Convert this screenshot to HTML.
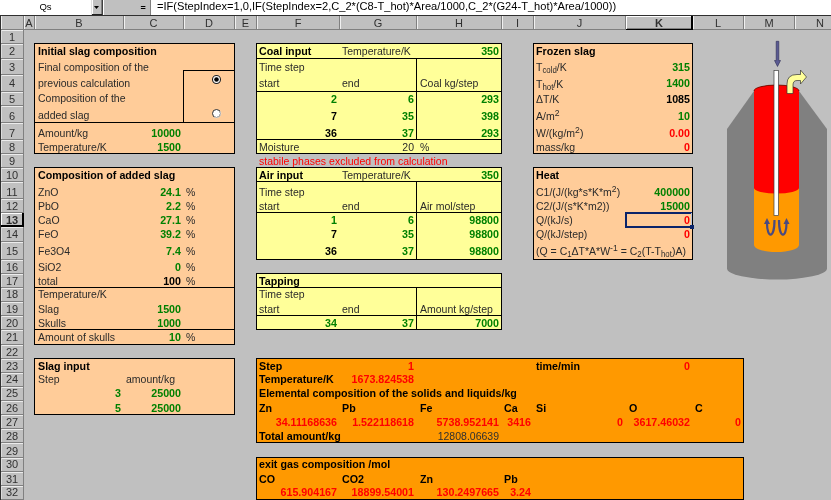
<!DOCTYPE html>
<html><head><meta charset="utf-8"><style>
html,body{margin:0;padding:0;}
body{width:831px;height:500px;overflow:hidden;position:relative;background:#c0c0c0;font-family:"Liberation Sans",sans-serif;}
body>div{position:absolute;}
#tx{position:absolute;left:0;top:0;width:831px;height:500px;will-change:transform;}
#tx>div{position:absolute;}
.t{line-height:0;white-space:nowrap;font-size:11.5px;transform:scaleX(0.913);transform-origin:0 0;color:#2a2a2a;}
.t.b{color:#000;}
.hd{line-height:0;white-space:nowrap;font-size:11px;color:#303030;text-align:center;}
.fb{line-height:0;white-space:nowrap;color:#000;}
sub,sup{line-height:0;vertical-align:baseline;position:relative;}
sub{top:2px;font-size:75%;}
sup{top:-4px;font-size:82%;}
</style></head><body>
<div style="left:0px;top:0px;width:831px;height:15px;background:#fff;"></div>
<div style="left:91px;top:0px;width:12px;height:15px;background:#c0c0c0;box-sizing:border-box;border-left:1px solid #dfdfdf;border-right:1px solid #404040;"></div>
<div style="left:92px;top:0px;width:1px;height:14px;background:#fff;"></div>
<div style="left:101px;top:0px;width:1px;height:14px;background:#808080;"></div>
<div style="left:92px;top:14px;width:10px;height:1px;background:#202020;"></div>
<svg style="position:absolute;left:94px;top:6px" width="6" height="4"><path d="M0,0H5L2.5,3Z" fill="#000"/></svg>
<div style="left:103px;top:0px;width:48px;height:15px;background:#c0c0c0;box-sizing:border-box;border-left:1px solid #fff;"></div>
<div style="left:150px;top:0px;width:1px;height:15px;background:#808080;"></div>
<div style="left:0px;top:15px;width:831px;height:1px;background:#303030;"></div>
<div style="left:0px;top:15px;width:1px;height:485px;background:#303030;"></div>
<div style="left:1px;top:16px;width:830px;height:14px;background:#c0c0c0;"></div>
<div style="left:1px;top:16px;width:1px;height:13px;background:#f0f0f0;"></div>
<div style="left:23px;top:16px;width:1px;height:14px;background:#808080;"></div>
<div style="left:1px;top:29px;width:22px;height:1px;background:#808080;"></div>
<div style="left:24px;top:16px;width:1px;height:13px;background:#f0f0f0;"></div>
<div style="left:34px;top:16px;width:1px;height:14px;background:#808080;"></div>
<div style="left:24px;top:29px;width:10px;height:1px;background:#808080;"></div>
<div style="left:35px;top:16px;width:1px;height:13px;background:#f0f0f0;"></div>
<div style="left:123px;top:16px;width:1px;height:14px;background:#808080;"></div>
<div style="left:35px;top:29px;width:88px;height:1px;background:#808080;"></div>
<div style="left:124px;top:16px;width:1px;height:13px;background:#f0f0f0;"></div>
<div style="left:183px;top:16px;width:1px;height:14px;background:#808080;"></div>
<div style="left:124px;top:29px;width:59px;height:1px;background:#808080;"></div>
<div style="left:184px;top:16px;width:1px;height:13px;background:#f0f0f0;"></div>
<div style="left:234px;top:16px;width:1px;height:14px;background:#808080;"></div>
<div style="left:184px;top:29px;width:50px;height:1px;background:#808080;"></div>
<div style="left:235px;top:16px;width:1px;height:13px;background:#f0f0f0;"></div>
<div style="left:256px;top:16px;width:1px;height:14px;background:#808080;"></div>
<div style="left:235px;top:29px;width:21px;height:1px;background:#808080;"></div>
<div style="left:257px;top:16px;width:1px;height:13px;background:#f0f0f0;"></div>
<div style="left:339px;top:16px;width:1px;height:14px;background:#808080;"></div>
<div style="left:257px;top:29px;width:82px;height:1px;background:#808080;"></div>
<div style="left:340px;top:16px;width:1px;height:13px;background:#f0f0f0;"></div>
<div style="left:416px;top:16px;width:1px;height:14px;background:#808080;"></div>
<div style="left:340px;top:29px;width:76px;height:1px;background:#808080;"></div>
<div style="left:417px;top:16px;width:1px;height:13px;background:#f0f0f0;"></div>
<div style="left:501px;top:16px;width:1px;height:14px;background:#808080;"></div>
<div style="left:417px;top:29px;width:84px;height:1px;background:#808080;"></div>
<div style="left:502px;top:16px;width:1px;height:13px;background:#f0f0f0;"></div>
<div style="left:533px;top:16px;width:1px;height:14px;background:#808080;"></div>
<div style="left:502px;top:29px;width:31px;height:1px;background:#808080;"></div>
<div style="left:534px;top:16px;width:1px;height:13px;background:#f0f0f0;"></div>
<div style="left:625px;top:16px;width:1px;height:14px;background:#808080;"></div>
<div style="left:534px;top:29px;width:91px;height:1px;background:#808080;"></div>
<div style="left:626px;top:16px;width:1px;height:13px;background:#f0f0f0;"></div>
<div style="left:692px;top:16px;width:1px;height:14px;background:#808080;"></div>
<div style="left:626px;top:29px;width:66px;height:1px;background:#808080;"></div>
<div style="left:693px;top:16px;width:1px;height:13px;background:#f0f0f0;"></div>
<div style="left:743px;top:16px;width:1px;height:14px;background:#808080;"></div>
<div style="left:693px;top:29px;width:50px;height:1px;background:#808080;"></div>
<div style="left:744px;top:16px;width:1px;height:13px;background:#f0f0f0;"></div>
<div style="left:794px;top:16px;width:1px;height:14px;background:#808080;"></div>
<div style="left:744px;top:29px;width:50px;height:1px;background:#808080;"></div>
<div style="left:795px;top:16px;width:1px;height:13px;background:#f0f0f0;"></div>
<div style="left:831px;top:16px;width:1px;height:14px;background:#808080;"></div>
<div style="left:795px;top:29px;width:36px;height:1px;background:#808080;"></div>
<div style="left:626px;top:16px;width:66px;height:1px;background:#fff;"></div>
<div style="left:626px;top:16px;width:1px;height:14px;background:#fff;"></div>
<div style="left:691px;top:16px;width:2px;height:14px;background:#000;"></div>
<div style="left:626px;top:29px;width:66px;height:1px;background:#000;"></div>
<div style="left:627px;top:28px;width:64px;height:1px;background:#808080;"></div>
<div style="left:1px;top:30px;width:22px;height:1px;background:#ececec;"></div>
<div style="left:1px;top:30px;width:1px;height:13px;background:#dcdcdc;"></div>
<div style="left:1px;top:43px;width:22px;height:1px;background:#808080;"></div>
<div style="left:23px;top:30px;width:1px;height:14px;background:#808080;"></div>
<div style="left:1px;top:44px;width:22px;height:1px;background:#ececec;"></div>
<div style="left:1px;top:44px;width:1px;height:14px;background:#dcdcdc;"></div>
<div style="left:1px;top:58px;width:22px;height:1px;background:#808080;"></div>
<div style="left:23px;top:44px;width:1px;height:15px;background:#808080;"></div>
<div style="left:1px;top:59px;width:22px;height:1px;background:#ececec;"></div>
<div style="left:1px;top:59px;width:1px;height:15px;background:#dcdcdc;"></div>
<div style="left:1px;top:74px;width:22px;height:1px;background:#808080;"></div>
<div style="left:23px;top:59px;width:1px;height:16px;background:#808080;"></div>
<div style="left:1px;top:75px;width:22px;height:1px;background:#ececec;"></div>
<div style="left:1px;top:75px;width:1px;height:16px;background:#dcdcdc;"></div>
<div style="left:1px;top:91px;width:22px;height:1px;background:#808080;"></div>
<div style="left:23px;top:75px;width:1px;height:17px;background:#808080;"></div>
<div style="left:1px;top:92px;width:22px;height:1px;background:#ececec;"></div>
<div style="left:1px;top:92px;width:1px;height:13px;background:#dcdcdc;"></div>
<div style="left:1px;top:105px;width:22px;height:1px;background:#808080;"></div>
<div style="left:23px;top:92px;width:1px;height:14px;background:#808080;"></div>
<div style="left:1px;top:106px;width:22px;height:1px;background:#ececec;"></div>
<div style="left:1px;top:106px;width:1px;height:16px;background:#dcdcdc;"></div>
<div style="left:1px;top:122px;width:22px;height:1px;background:#808080;"></div>
<div style="left:23px;top:106px;width:1px;height:17px;background:#808080;"></div>
<div style="left:1px;top:123px;width:22px;height:1px;background:#ececec;"></div>
<div style="left:1px;top:123px;width:1px;height:16px;background:#dcdcdc;"></div>
<div style="left:1px;top:139px;width:22px;height:1px;background:#808080;"></div>
<div style="left:23px;top:123px;width:1px;height:17px;background:#808080;"></div>
<div style="left:1px;top:140px;width:22px;height:1px;background:#ececec;"></div>
<div style="left:1px;top:140px;width:1px;height:13px;background:#dcdcdc;"></div>
<div style="left:1px;top:153px;width:22px;height:1px;background:#808080;"></div>
<div style="left:23px;top:140px;width:1px;height:14px;background:#808080;"></div>
<div style="left:1px;top:154px;width:22px;height:1px;background:#ececec;"></div>
<div style="left:1px;top:154px;width:1px;height:13px;background:#dcdcdc;"></div>
<div style="left:1px;top:167px;width:22px;height:1px;background:#808080;"></div>
<div style="left:23px;top:154px;width:1px;height:14px;background:#808080;"></div>
<div style="left:1px;top:168px;width:22px;height:1px;background:#ececec;"></div>
<div style="left:1px;top:168px;width:1px;height:13px;background:#dcdcdc;"></div>
<div style="left:1px;top:181px;width:22px;height:1px;background:#808080;"></div>
<div style="left:23px;top:168px;width:1px;height:14px;background:#808080;"></div>
<div style="left:1px;top:182px;width:22px;height:1px;background:#ececec;"></div>
<div style="left:1px;top:182px;width:1px;height:16px;background:#dcdcdc;"></div>
<div style="left:1px;top:198px;width:22px;height:1px;background:#808080;"></div>
<div style="left:23px;top:182px;width:1px;height:17px;background:#808080;"></div>
<div style="left:1px;top:199px;width:22px;height:1px;background:#ececec;"></div>
<div style="left:1px;top:199px;width:1px;height:13px;background:#dcdcdc;"></div>
<div style="left:1px;top:212px;width:22px;height:1px;background:#808080;"></div>
<div style="left:23px;top:199px;width:1px;height:14px;background:#808080;"></div>
<div style="left:1px;top:213px;width:22px;height:1px;background:#ececec;"></div>
<div style="left:1px;top:213px;width:1px;height:13px;background:#dcdcdc;"></div>
<div style="left:1px;top:226px;width:22px;height:1px;background:#808080;"></div>
<div style="left:23px;top:213px;width:1px;height:14px;background:#808080;"></div>
<div style="left:1px;top:227px;width:22px;height:1px;background:#ececec;"></div>
<div style="left:1px;top:227px;width:1px;height:14px;background:#dcdcdc;"></div>
<div style="left:1px;top:241px;width:22px;height:1px;background:#808080;"></div>
<div style="left:23px;top:227px;width:1px;height:15px;background:#808080;"></div>
<div style="left:1px;top:242px;width:22px;height:1px;background:#ececec;"></div>
<div style="left:1px;top:242px;width:1px;height:17px;background:#dcdcdc;"></div>
<div style="left:1px;top:259px;width:22px;height:1px;background:#808080;"></div>
<div style="left:23px;top:242px;width:1px;height:18px;background:#808080;"></div>
<div style="left:1px;top:260px;width:22px;height:1px;background:#ececec;"></div>
<div style="left:1px;top:260px;width:1px;height:13px;background:#dcdcdc;"></div>
<div style="left:1px;top:273px;width:22px;height:1px;background:#808080;"></div>
<div style="left:23px;top:260px;width:1px;height:14px;background:#808080;"></div>
<div style="left:1px;top:274px;width:22px;height:1px;background:#ececec;"></div>
<div style="left:1px;top:274px;width:1px;height:13px;background:#dcdcdc;"></div>
<div style="left:1px;top:287px;width:22px;height:1px;background:#808080;"></div>
<div style="left:23px;top:274px;width:1px;height:14px;background:#808080;"></div>
<div style="left:1px;top:288px;width:22px;height:1px;background:#ececec;"></div>
<div style="left:1px;top:288px;width:1px;height:13px;background:#dcdcdc;"></div>
<div style="left:1px;top:301px;width:22px;height:1px;background:#808080;"></div>
<div style="left:23px;top:288px;width:1px;height:14px;background:#808080;"></div>
<div style="left:1px;top:302px;width:22px;height:1px;background:#ececec;"></div>
<div style="left:1px;top:302px;width:1px;height:13px;background:#dcdcdc;"></div>
<div style="left:1px;top:315px;width:22px;height:1px;background:#808080;"></div>
<div style="left:23px;top:302px;width:1px;height:14px;background:#808080;"></div>
<div style="left:1px;top:316px;width:22px;height:1px;background:#ececec;"></div>
<div style="left:1px;top:316px;width:1px;height:13px;background:#dcdcdc;"></div>
<div style="left:1px;top:329px;width:22px;height:1px;background:#808080;"></div>
<div style="left:23px;top:316px;width:1px;height:14px;background:#808080;"></div>
<div style="left:1px;top:330px;width:22px;height:1px;background:#ececec;"></div>
<div style="left:1px;top:330px;width:1px;height:14px;background:#dcdcdc;"></div>
<div style="left:1px;top:344px;width:22px;height:1px;background:#808080;"></div>
<div style="left:23px;top:330px;width:1px;height:15px;background:#808080;"></div>
<div style="left:1px;top:345px;width:22px;height:1px;background:#ececec;"></div>
<div style="left:1px;top:345px;width:1px;height:13px;background:#dcdcdc;"></div>
<div style="left:1px;top:358px;width:22px;height:1px;background:#808080;"></div>
<div style="left:23px;top:345px;width:1px;height:14px;background:#808080;"></div>
<div style="left:1px;top:359px;width:22px;height:1px;background:#ececec;"></div>
<div style="left:1px;top:359px;width:1px;height:13px;background:#dcdcdc;"></div>
<div style="left:1px;top:372px;width:22px;height:1px;background:#808080;"></div>
<div style="left:23px;top:359px;width:1px;height:14px;background:#808080;"></div>
<div style="left:1px;top:373px;width:22px;height:1px;background:#ececec;"></div>
<div style="left:1px;top:373px;width:1px;height:13px;background:#dcdcdc;"></div>
<div style="left:1px;top:386px;width:22px;height:1px;background:#808080;"></div>
<div style="left:23px;top:373px;width:1px;height:14px;background:#808080;"></div>
<div style="left:1px;top:387px;width:22px;height:1px;background:#ececec;"></div>
<div style="left:1px;top:387px;width:1px;height:13px;background:#dcdcdc;"></div>
<div style="left:1px;top:400px;width:22px;height:1px;background:#808080;"></div>
<div style="left:23px;top:387px;width:1px;height:14px;background:#808080;"></div>
<div style="left:1px;top:401px;width:22px;height:1px;background:#ececec;"></div>
<div style="left:1px;top:401px;width:1px;height:13px;background:#dcdcdc;"></div>
<div style="left:1px;top:414px;width:22px;height:1px;background:#808080;"></div>
<div style="left:23px;top:401px;width:1px;height:14px;background:#808080;"></div>
<div style="left:1px;top:415px;width:22px;height:1px;background:#ececec;"></div>
<div style="left:1px;top:415px;width:1px;height:13px;background:#dcdcdc;"></div>
<div style="left:1px;top:428px;width:22px;height:1px;background:#808080;"></div>
<div style="left:23px;top:415px;width:1px;height:14px;background:#808080;"></div>
<div style="left:1px;top:429px;width:22px;height:1px;background:#ececec;"></div>
<div style="left:1px;top:429px;width:1px;height:13px;background:#dcdcdc;"></div>
<div style="left:1px;top:442px;width:22px;height:1px;background:#808080;"></div>
<div style="left:23px;top:429px;width:1px;height:14px;background:#808080;"></div>
<div style="left:1px;top:443px;width:22px;height:1px;background:#ececec;"></div>
<div style="left:1px;top:443px;width:1px;height:14px;background:#dcdcdc;"></div>
<div style="left:1px;top:457px;width:22px;height:1px;background:#808080;"></div>
<div style="left:23px;top:443px;width:1px;height:15px;background:#808080;"></div>
<div style="left:1px;top:458px;width:22px;height:1px;background:#ececec;"></div>
<div style="left:1px;top:458px;width:1px;height:13px;background:#dcdcdc;"></div>
<div style="left:1px;top:471px;width:22px;height:1px;background:#808080;"></div>
<div style="left:23px;top:458px;width:1px;height:14px;background:#808080;"></div>
<div style="left:1px;top:472px;width:22px;height:1px;background:#ececec;"></div>
<div style="left:1px;top:472px;width:1px;height:13px;background:#dcdcdc;"></div>
<div style="left:1px;top:485px;width:22px;height:1px;background:#808080;"></div>
<div style="left:23px;top:472px;width:1px;height:14px;background:#808080;"></div>
<div style="left:1px;top:486px;width:22px;height:1px;background:#ececec;"></div>
<div style="left:1px;top:486px;width:1px;height:13px;background:#dcdcdc;"></div>
<div style="left:1px;top:499px;width:22px;height:1px;background:#808080;"></div>
<div style="left:23px;top:486px;width:1px;height:14px;background:#808080;"></div>
<div style="left:1px;top:213px;width:22px;height:1px;background:#fff;"></div>
<div style="left:1px;top:213px;width:1px;height:14px;background:#fff;"></div>
<div style="left:22px;top:213px;width:2px;height:14px;background:#000;"></div>
<div style="left:1px;top:225px;width:22px;height:2px;background:#000;"></div>
<div style="left:34px;top:43px;width:201px;height:111px;background:#ffcc99;border:1px solid #000;box-sizing:border-box"></div>
<div style="left:34px;top:122px;width:201px;height:1px;background:#000;"></div>
<div style="left:183px;top:70px;width:1px;height:53px;background:#000;"></div>
<div style="left:183px;top:70px;width:52px;height:1px;background:#000;"></div>
<svg style="position:absolute;left:210px;top:73px" width="13" height="13"><circle cx="6.5" cy="6.5" r="4" fill="#fff" stroke="#202020" stroke-width="1.1"/><circle cx="6.5" cy="6.5" r="2.3" fill="#000"/></svg>
<svg style="position:absolute;left:210px;top:107px" width="13" height="13"><circle cx="6.5" cy="6.5" r="4" fill="#fff" stroke="#303030" stroke-width="1"/><path d="M9.8,4.2 A4,4 0 0 1 4.2,9.8" fill="none" stroke="#fff" stroke-width="1.1" opacity="0.6"/></svg>
<div style="left:34px;top:167px;width:201px;height:178px;background:#ffcc99;border:1px solid #000;box-sizing:border-box"></div>
<div style="left:34px;top:287px;width:201px;height:1px;background:#000;"></div>
<div style="left:34px;top:329px;width:201px;height:1px;background:#000;"></div>
<div style="left:34px;top:358px;width:201px;height:57px;background:#ffcc99;border:1px solid #000;box-sizing:border-box"></div>
<div style="left:256px;top:43px;width:246px;height:111px;background:#ffff99;border:1px solid #000;box-sizing:border-box"></div>
<div style="left:256px;top:58px;width:246px;height:1px;background:#000;"></div>
<div style="left:256px;top:91px;width:246px;height:1px;background:#000;"></div>
<div style="left:256px;top:139px;width:246px;height:1px;background:#000;"></div>
<div style="left:416px;top:58px;width:1px;height:82px;background:#000;"></div>
<div style="left:256px;top:167px;width:246px;height:93px;background:#ffff99;border:1px solid #000;box-sizing:border-box"></div>
<div style="left:256px;top:181px;width:246px;height:1px;background:#000;"></div>
<div style="left:256px;top:212px;width:246px;height:1px;background:#000;"></div>
<div style="left:416px;top:181px;width:1px;height:79px;background:#000;"></div>
<div style="left:256px;top:273px;width:246px;height:57px;background:#ffff99;border:1px solid #000;box-sizing:border-box"></div>
<div style="left:256px;top:287px;width:246px;height:1px;background:#000;"></div>
<div style="left:256px;top:315px;width:246px;height:1px;background:#000;"></div>
<div style="left:416px;top:287px;width:1px;height:43px;background:#000;"></div>
<div style="left:533px;top:43px;width:160px;height:111px;background:#ffcc99;border:1px solid #000;box-sizing:border-box"></div>
<div style="left:533px;top:167px;width:160px;height:93px;background:#ffcc99;border:1px solid #000;box-sizing:border-box"></div>
<div style="left:256px;top:358px;width:488px;height:85px;background:#ff9900;border:1px solid #000;box-sizing:border-box"></div>
<div style="left:256px;top:457px;width:488px;height:43px;background:#ff9900;border:1px solid #000;box-sizing:border-box"></div>
<svg style="position:absolute;left:0;top:0" width="831" height="500" viewBox="0 0 831 500">
<path d="M754,91 L727,129 L727,268.5 A50,11 0 0 0 827,268.5 L827,129 L799,91 Z" fill="#808080"/>
<path d="M754,245 L754,91 A22.5,6 0 0 1 799,91 L799,245 A22.5,7 0 0 1 754,245 Z" fill="#ff9900"/>
<path d="M754,188 L754,91 A22.5,6 0 0 1 799,91 L799,188 A22.5,5.5 0 0 1 754,188 Z" fill="#ff0000"/>
<path d="M754,91 A22.5,6 0 0 1 799,91" fill="none" stroke="#600000" stroke-width="0.8"/>
<rect x="774" y="70.5" width="4.5" height="145" fill="#fff" stroke="#404040" stroke-width="0.7"/>
<path d="M776.2,41.3 H778.8 V60.5 H780.5 L777.5,66.5 L774.5,60.5 H776.2 Z" fill="#5a5a92" stroke="#2e2e55" stroke-width="0.6"/>
<path d="M787,93.5 L787,84 Q787,74.5 797,74.5 L800.5,74.5 L800.5,70 L806.5,77 L800.5,84 L800.5,80.5 L797,80.5 Q793,80.5 793,85 L793,93.5 Z" fill="#ffff99" stroke="#333" stroke-width="0.7"/>
<path d="M774.5,220 C774.5,239 767,239 767,223" fill="none" stroke="#4a4a80" stroke-width="2.2"/>
<path d="M764,224 L767,218 L770,224 Z" fill="#4a4a80"/>
<path d="M779,220 C779,239 786.5,239 786.5,223" fill="none" stroke="#4a4a80" stroke-width="2.2"/>
<path d="M783.5,224 L786.5,218 L789.5,224 Z" fill="#4a4a80"/>
</svg>
<div id="tx">
<div class="fb" style="left:0;top:7px;width:91px;text-align:center;font-size:9.5px">Qs</div>
<div class="fb" style="left:140.5px;top:8px;font-weight:bold;font-size:9px">=</div>
<div class="fb" style="left:157px;top:6px;font-size:11.1px">=IF(StepIndex=1,0,IF(StepIndex=2,C_2*(C8-T_hot)*Area/1000,C_2*(G24-T_hot)*Area/1000))</div>
<div class="hd" style="left:-1.0px;top:23px;width:60px;">A</div>
<div class="hd" style="left:49.0px;top:23px;width:60px;">B</div>
<div class="hd" style="left:123.5px;top:23px;width:60px;">C</div>
<div class="hd" style="left:179.0px;top:23px;width:60px;">D</div>
<div class="hd" style="left:215.5px;top:23px;width:60px;">E</div>
<div class="hd" style="left:268.0px;top:23px;width:60px;">F</div>
<div class="hd" style="left:348.0px;top:23px;width:60px;">G</div>
<div class="hd" style="left:429.0px;top:23px;width:60px;">H</div>
<div class="hd" style="left:487.5px;top:23px;width:60px;">I</div>
<div class="hd" style="left:549.5px;top:23px;width:60px;">J</div>
<div class="hd" style="left:629.0px;top:23px;width:60px;font-weight:bold;">K</div>
<div class="hd" style="left:688.0px;top:23px;width:60px;">L</div>
<div class="hd" style="left:739.0px;top:23px;width:60px;">M</div>
<div class="hd" style="left:790.0px;top:23px;width:60px;">N</div>
<div class="hd" style="left:1px;top:37px;width:22px;">1</div>
<div class="hd" style="left:1px;top:51px;width:22px;">2</div>
<div class="hd" style="left:1px;top:67px;width:22px;">3</div>
<div class="hd" style="left:1px;top:83px;width:22px;">4</div>
<div class="hd" style="left:1px;top:99px;width:22px;">5</div>
<div class="hd" style="left:1px;top:116px;width:22px;">6</div>
<div class="hd" style="left:1px;top:133px;width:22px;">7</div>
<div class="hd" style="left:1px;top:147px;width:22px;">8</div>
<div class="hd" style="left:1px;top:161px;width:22px;">9</div>
<div class="hd" style="left:1px;top:175px;width:22px;">10</div>
<div class="hd" style="left:1px;top:192px;width:22px;">11</div>
<div class="hd" style="left:1px;top:206px;width:22px;">12</div>
<div class="hd" style="left:1px;top:220px;width:22px;font-weight:bold;">13</div>
<div class="hd" style="left:1px;top:234px;width:22px;">14</div>
<div class="hd" style="left:1px;top:251px;width:22px;">15</div>
<div class="hd" style="left:1px;top:267px;width:22px;">16</div>
<div class="hd" style="left:1px;top:281px;width:22px;">17</div>
<div class="hd" style="left:1px;top:294px;width:22px;">18</div>
<div class="hd" style="left:1px;top:309px;width:22px;">19</div>
<div class="hd" style="left:1px;top:323px;width:22px;">20</div>
<div class="hd" style="left:1px;top:337px;width:22px;">21</div>
<div class="hd" style="left:1px;top:352px;width:22px;">22</div>
<div class="hd" style="left:1px;top:366px;width:22px;">23</div>
<div class="hd" style="left:1px;top:379px;width:22px;">24</div>
<div class="hd" style="left:1px;top:393px;width:22px;">25</div>
<div class="hd" style="left:1px;top:408px;width:22px;">26</div>
<div class="hd" style="left:1px;top:422px;width:22px;">27</div>
<div class="hd" style="left:1px;top:436px;width:22px;">28</div>
<div class="hd" style="left:1px;top:451px;width:22px;">29</div>
<div class="hd" style="left:1px;top:464px;width:22px;">30</div>
<div class="hd" style="left:1px;top:479px;width:22px;">31</div>
<div class="hd" style="left:1px;top:492px;width:22px;">32</div>
<div class="t" style="top:51px;font-weight:bold;color:#000;transform:scaleX(0.93);left:37.5px;">Initial slag composition</div>
<div class="t" style="top:67px;left:37.5px;">Final composition of the</div>
<div class="t" style="top:83px;left:37.5px;">previous calculation</div>
<div class="t" style="top:98px;left:37.5px;">Composition of the</div>
<div class="t" style="top:115px;left:37.5px;">added slag</div>
<div class="t" style="top:133px;left:37.5px;">Amount/kg</div>
<div class="t" style="top:133px;font-weight:bold;color:#000;transform:scaleX(0.93);color:#008000;left:-419px;width:600px;text-align:right;transform-origin:100% 0;">10000</div>
<div class="t" style="top:147px;left:37.5px;">Temperature/K</div>
<div class="t" style="top:147px;font-weight:bold;color:#000;transform:scaleX(0.93);color:#008000;left:-419px;width:600px;text-align:right;transform-origin:100% 0;">1500</div>
<div class="t" style="top:175px;font-weight:bold;color:#000;transform:scaleX(0.93);left:37.5px;">Composition of added slag</div>
<div class="t" style="top:192px;left:37.5px;">ZnO</div>
<div class="t" style="top:192px;font-weight:bold;color:#000;transform:scaleX(0.93);color:#008000;left:-419px;width:600px;text-align:right;transform-origin:100% 0;">24.1</div>
<div class="t" style="top:192px;left:185.5px;">%</div>
<div class="t" style="top:206px;left:37.5px;">PbO</div>
<div class="t" style="top:206px;font-weight:bold;color:#000;transform:scaleX(0.93);color:#008000;left:-419px;width:600px;text-align:right;transform-origin:100% 0;">2.2</div>
<div class="t" style="top:206px;left:185.5px;">%</div>
<div class="t" style="top:220px;left:37.5px;">CaO</div>
<div class="t" style="top:220px;font-weight:bold;color:#000;transform:scaleX(0.93);color:#008000;left:-419px;width:600px;text-align:right;transform-origin:100% 0;">27.1</div>
<div class="t" style="top:220px;left:185.5px;">%</div>
<div class="t" style="top:234px;left:37.5px;">FeO</div>
<div class="t" style="top:234px;font-weight:bold;color:#000;transform:scaleX(0.93);color:#008000;left:-419px;width:600px;text-align:right;transform-origin:100% 0;">39.2</div>
<div class="t" style="top:234px;left:185.5px;">%</div>
<div class="t" style="top:251px;left:37.5px;">Fe3O4</div>
<div class="t" style="top:251px;font-weight:bold;color:#000;transform:scaleX(0.93);color:#008000;left:-419px;width:600px;text-align:right;transform-origin:100% 0;">7.4</div>
<div class="t" style="top:251px;left:185.5px;">%</div>
<div class="t" style="top:267px;left:37.5px;">SiO2</div>
<div class="t" style="top:267px;font-weight:bold;color:#000;transform:scaleX(0.93);color:#008000;left:-419px;width:600px;text-align:right;transform-origin:100% 0;">0</div>
<div class="t" style="top:267px;left:185.5px;">%</div>
<div class="t" style="top:281px;left:37.5px;">total</div>
<div class="t" style="top:281px;font-weight:bold;color:#000;transform:scaleX(0.93);left:-419px;width:600px;text-align:right;transform-origin:100% 0;">100</div>
<div class="t" style="top:281px;left:185.5px;">%</div>
<div class="t" style="top:294px;left:37.5px;">Temperature/K</div>
<div class="t" style="top:309px;left:37.5px;">Slag</div>
<div class="t" style="top:309px;font-weight:bold;color:#000;transform:scaleX(0.93);color:#008000;left:-419px;width:600px;text-align:right;transform-origin:100% 0;">1500</div>
<div class="t" style="top:323px;left:37.5px;">Skulls</div>
<div class="t" style="top:323px;font-weight:bold;color:#000;transform:scaleX(0.93);color:#008000;left:-419px;width:600px;text-align:right;transform-origin:100% 0;">1000</div>
<div class="t" style="top:337px;left:37.5px;">Amount of skulls</div>
<div class="t" style="top:337px;font-weight:bold;color:#000;transform:scaleX(0.93);color:#008000;left:-419px;width:600px;text-align:right;transform-origin:100% 0;">10</div>
<div class="t" style="top:337px;left:185.5px;">%</div>
<div class="t" style="top:366px;font-weight:bold;color:#000;transform:scaleX(0.93);left:37.5px;">Slag input</div>
<div class="t" style="top:379px;left:37.5px;">Step</div>
<div class="t" style="top:379px;left:126px;">amount/kg</div>
<div class="t" style="top:393px;font-weight:bold;color:#000;transform:scaleX(0.93);color:#008000;left:-479px;width:600px;text-align:right;transform-origin:100% 0;">3</div>
<div class="t" style="top:393px;font-weight:bold;color:#000;transform:scaleX(0.93);color:#008000;left:-419px;width:600px;text-align:right;transform-origin:100% 0;">25000</div>
<div class="t" style="top:408px;font-weight:bold;color:#000;transform:scaleX(0.93);color:#008000;left:-479px;width:600px;text-align:right;transform-origin:100% 0;">5</div>
<div class="t" style="top:408px;font-weight:bold;color:#000;transform:scaleX(0.93);color:#008000;left:-419px;width:600px;text-align:right;transform-origin:100% 0;">25000</div>
<div class="t" style="top:51px;font-weight:bold;color:#000;transform:scaleX(0.93);left:259px;">Coal input</div>
<div class="t" style="top:51px;left:342px;">Temperature/K</div>
<div class="t" style="top:51px;font-weight:bold;color:#000;transform:scaleX(0.93);color:#008000;left:-101px;width:600px;text-align:right;transform-origin:100% 0;">350</div>
<div class="t" style="top:67px;left:259px;">Time step</div>
<div class="t" style="top:83px;left:259px;">start</div>
<div class="t" style="top:83px;left:342px;">end</div>
<div class="t" style="top:83px;left:419.5px;">Coal kg/step</div>
<div class="t" style="top:99px;font-weight:bold;color:#000;transform:scaleX(0.93);color:#008000;left:-263px;width:600px;text-align:right;transform-origin:100% 0;">2</div>
<div class="t" style="top:99px;font-weight:bold;color:#000;transform:scaleX(0.93);color:#008000;left:-186px;width:600px;text-align:right;transform-origin:100% 0;">6</div>
<div class="t" style="top:99px;font-weight:bold;color:#000;transform:scaleX(0.93);color:#008000;left:-101px;width:600px;text-align:right;transform-origin:100% 0;">293</div>
<div class="t" style="top:116px;font-weight:bold;color:#000;transform:scaleX(0.93);left:-263px;width:600px;text-align:right;transform-origin:100% 0;">7</div>
<div class="t" style="top:116px;font-weight:bold;color:#000;transform:scaleX(0.93);color:#008000;left:-186px;width:600px;text-align:right;transform-origin:100% 0;">35</div>
<div class="t" style="top:116px;font-weight:bold;color:#000;transform:scaleX(0.93);color:#008000;left:-101px;width:600px;text-align:right;transform-origin:100% 0;">398</div>
<div class="t" style="top:133px;font-weight:bold;color:#000;transform:scaleX(0.93);left:-263px;width:600px;text-align:right;transform-origin:100% 0;">36</div>
<div class="t" style="top:133px;font-weight:bold;color:#000;transform:scaleX(0.93);color:#008000;left:-186px;width:600px;text-align:right;transform-origin:100% 0;">37</div>
<div class="t" style="top:133px;font-weight:bold;color:#000;transform:scaleX(0.93);color:#008000;left:-101px;width:600px;text-align:right;transform-origin:100% 0;">293</div>
<div class="t" style="top:147px;left:259px;">Moisture</div>
<div class="t" style="top:147px;left:-186px;width:600px;text-align:right;transform-origin:100% 0;">20</div>
<div class="t" style="top:147px;left:419.5px;">%</div>
<div class="t" style="top:161px;color:#ff0000;left:259px;">stabile phases excluded from calculation</div>
<div class="t" style="top:175px;font-weight:bold;color:#000;transform:scaleX(0.93);left:259px;">Air input</div>
<div class="t" style="top:175px;left:342px;">Temperature/K</div>
<div class="t" style="top:175px;font-weight:bold;color:#000;transform:scaleX(0.93);color:#008000;left:-101px;width:600px;text-align:right;transform-origin:100% 0;">350</div>
<div class="t" style="top:192px;left:259px;">Time step</div>
<div class="t" style="top:206px;left:259px;">start</div>
<div class="t" style="top:206px;left:342px;">end</div>
<div class="t" style="top:206px;left:419.5px;">Air mol/step</div>
<div class="t" style="top:220px;font-weight:bold;color:#000;transform:scaleX(0.93);color:#008000;left:-263px;width:600px;text-align:right;transform-origin:100% 0;">1</div>
<div class="t" style="top:220px;font-weight:bold;color:#000;transform:scaleX(0.93);color:#008000;left:-186px;width:600px;text-align:right;transform-origin:100% 0;">6</div>
<div class="t" style="top:220px;font-weight:bold;color:#000;transform:scaleX(0.93);color:#008000;left:-101px;width:600px;text-align:right;transform-origin:100% 0;">98800</div>
<div class="t" style="top:234px;font-weight:bold;color:#000;transform:scaleX(0.93);left:-263px;width:600px;text-align:right;transform-origin:100% 0;">7</div>
<div class="t" style="top:234px;font-weight:bold;color:#000;transform:scaleX(0.93);color:#008000;left:-186px;width:600px;text-align:right;transform-origin:100% 0;">35</div>
<div class="t" style="top:234px;font-weight:bold;color:#000;transform:scaleX(0.93);color:#008000;left:-101px;width:600px;text-align:right;transform-origin:100% 0;">98800</div>
<div class="t" style="top:251px;font-weight:bold;color:#000;transform:scaleX(0.93);left:-263px;width:600px;text-align:right;transform-origin:100% 0;">36</div>
<div class="t" style="top:251px;font-weight:bold;color:#000;transform:scaleX(0.93);color:#008000;left:-186px;width:600px;text-align:right;transform-origin:100% 0;">37</div>
<div class="t" style="top:251px;font-weight:bold;color:#000;transform:scaleX(0.93);color:#008000;left:-101px;width:600px;text-align:right;transform-origin:100% 0;">98800</div>
<div class="t" style="top:281px;font-weight:bold;color:#000;transform:scaleX(0.93);left:259px;">Tapping</div>
<div class="t" style="top:294px;left:259px;">Time step</div>
<div class="t" style="top:309px;left:259px;">start</div>
<div class="t" style="top:309px;left:342px;">end</div>
<div class="t" style="top:309px;left:419.5px;">Amount kg/step</div>
<div class="t" style="top:323px;font-weight:bold;color:#000;transform:scaleX(0.93);color:#008000;left:-263px;width:600px;text-align:right;transform-origin:100% 0;">34</div>
<div class="t" style="top:323px;font-weight:bold;color:#000;transform:scaleX(0.93);color:#008000;left:-186px;width:600px;text-align:right;transform-origin:100% 0;">37</div>
<div class="t" style="top:323px;font-weight:bold;color:#000;transform:scaleX(0.93);color:#008000;left:-101px;width:600px;text-align:right;transform-origin:100% 0;">7000</div>
<div class="t" style="top:51px;font-weight:bold;color:#000;transform:scaleX(0.93);left:536px;">Frozen slag</div>
<div class="t" style="top:67px;left:536px;">T<sub>cold</sub>/K</div>
<div class="t" style="top:67px;font-weight:bold;color:#000;transform:scaleX(0.93);color:#008000;left:90px;width:600px;text-align:right;transform-origin:100% 0;">315</div>
<div class="t" style="top:84px;left:536px;">T<sub>hot</sub>/K</div>
<div class="t" style="top:83px;font-weight:bold;color:#000;transform:scaleX(0.93);color:#008000;left:90px;width:600px;text-align:right;transform-origin:100% 0;">1400</div>
<div class="t" style="top:99px;left:536px;">&Delta;T/K</div>
<div class="t" style="top:99px;font-weight:bold;color:#000;transform:scaleX(0.93);left:90px;width:600px;text-align:right;transform-origin:100% 0;">1085</div>
<div class="t" style="top:116px;left:536px;">A/m<sup>2</sup></div>
<div class="t" style="top:116px;font-weight:bold;color:#000;transform:scaleX(0.93);color:#008000;left:90px;width:600px;text-align:right;transform-origin:100% 0;">10</div>
<div class="t" style="top:133px;left:536px;">W/(kg/m<sup>2</sup>)</div>
<div class="t" style="top:133px;font-weight:bold;color:#000;transform:scaleX(0.93);color:#ff0000;left:90px;width:600px;text-align:right;transform-origin:100% 0;">0.00</div>
<div class="t" style="top:147px;left:536px;">mass/kg</div>
<div class="t" style="top:147px;font-weight:bold;color:#000;transform:scaleX(0.93);color:#ff0000;left:90px;width:600px;text-align:right;transform-origin:100% 0;">0</div>
<div class="t" style="top:175px;font-weight:bold;color:#000;transform:scaleX(0.93);left:536px;">Heat</div>
<div class="t" style="top:192px;left:536px;">C1/(J/(kg*s*K*m<sup>2</sup>)</div>
<div class="t" style="top:192px;font-weight:bold;color:#000;transform:scaleX(0.93);color:#008000;left:90px;width:600px;text-align:right;transform-origin:100% 0;">400000</div>
<div class="t" style="top:206px;left:536px;">C2/(J/(s*K*m2))</div>
<div class="t" style="top:206px;font-weight:bold;color:#000;transform:scaleX(0.93);color:#008000;left:90px;width:600px;text-align:right;transform-origin:100% 0;">15000</div>
<div class="t" style="top:220px;left:536px;">Q/(kJ/s)</div>
<div class="t" style="top:220px;font-weight:bold;color:#000;transform:scaleX(0.93);color:#ff0000;left:90px;width:600px;text-align:right;transform-origin:100% 0;">0</div>
<div class="t" style="top:234px;left:536px;">Q/(kJ/step)</div>
<div class="t" style="top:234px;font-weight:bold;color:#000;transform:scaleX(0.93);color:#ff0000;left:90px;width:600px;text-align:right;transform-origin:100% 0;">0</div>
<div class="t" style="top:251px;left:536px;">(Q = C<sub>1</sub>&Delta;T*A*W<sup>-1</sup> = C<sub>2</sub>(T-T<sub>hot</sub>)A)</div>
<div class="t" style="top:366px;font-weight:bold;color:#000;transform:scaleX(0.93);left:259px;">Step</div>
<div class="t" style="top:366px;font-weight:bold;color:#000;transform:scaleX(0.93);color:#ff0000;left:-186px;width:600px;text-align:right;transform-origin:100% 0;">1</div>
<div class="t" style="top:366px;font-weight:bold;color:#000;transform:scaleX(0.93);left:536px;">time/min</div>
<div class="t" style="top:366px;font-weight:bold;color:#000;transform:scaleX(0.93);color:#ff0000;left:90px;width:600px;text-align:right;transform-origin:100% 0;">0</div>
<div class="t" style="top:379px;font-weight:bold;color:#000;transform:scaleX(0.93);left:259px;">Temperature/K</div>
<div class="t" style="top:379px;font-weight:bold;color:#000;transform:scaleX(0.93);color:#ff0000;left:-186px;width:600px;text-align:right;transform-origin:100% 0;">1673.824538</div>
<div class="t" style="top:393px;font-weight:bold;color:#000;transform:scaleX(0.93);left:259px;">Elemental composition of the solids and liquids/kg</div>
<div class="t" style="top:408px;font-weight:bold;color:#000;transform:scaleX(0.93);left:259px;">Zn</div>
<div class="t" style="top:408px;font-weight:bold;color:#000;transform:scaleX(0.93);left:342px;">Pb</div>
<div class="t" style="top:408px;font-weight:bold;color:#000;transform:scaleX(0.93);left:419.5px;">Fe</div>
<div class="t" style="top:408px;font-weight:bold;color:#000;transform:scaleX(0.93);left:504px;">Ca</div>
<div class="t" style="top:408px;font-weight:bold;color:#000;transform:scaleX(0.93);left:536px;">Si</div>
<div class="t" style="top:408px;font-weight:bold;color:#000;transform:scaleX(0.93);left:628.5px;">O</div>
<div class="t" style="top:408px;font-weight:bold;color:#000;transform:scaleX(0.93);left:694.5px;">C</div>
<div class="t" style="top:422px;font-weight:bold;color:#000;transform:scaleX(0.93);color:#ff0000;left:-263px;width:600px;text-align:right;transform-origin:100% 0;">34.11168636</div>
<div class="t" style="top:422px;font-weight:bold;color:#000;transform:scaleX(0.93);color:#ff0000;left:-186px;width:600px;text-align:right;transform-origin:100% 0;">1.522118618</div>
<div class="t" style="top:422px;font-weight:bold;color:#000;transform:scaleX(0.93);color:#ff0000;left:-101px;width:600px;text-align:right;transform-origin:100% 0;">5738.952141</div>
<div class="t" style="top:422px;font-weight:bold;color:#000;transform:scaleX(0.93);color:#ff0000;left:-69px;width:600px;text-align:right;transform-origin:100% 0;">3416</div>
<div class="t" style="top:422px;font-weight:bold;color:#000;transform:scaleX(0.93);color:#ff0000;left:23px;width:600px;text-align:right;transform-origin:100% 0;">0</div>
<div class="t" style="top:422px;font-weight:bold;color:#000;transform:scaleX(0.93);color:#ff0000;left:90px;width:600px;text-align:right;transform-origin:100% 0;">3617.46032</div>
<div class="t" style="top:422px;font-weight:bold;color:#000;transform:scaleX(0.93);color:#ff0000;left:141px;width:600px;text-align:right;transform-origin:100% 0;">0</div>
<div class="t" style="top:436px;font-weight:bold;color:#000;transform:scaleX(0.93);left:259px;">Total amount/kg</div>
<div class="t" style="top:436px;color:#303030;left:-101px;width:600px;text-align:right;transform-origin:100% 0;">12808.06639</div>
<div class="t" style="top:464px;font-weight:bold;color:#000;transform:scaleX(0.93);left:259px;">exit gas composition /mol</div>
<div class="t" style="top:479px;font-weight:bold;color:#000;transform:scaleX(0.93);left:259px;">CO</div>
<div class="t" style="top:479px;font-weight:bold;color:#000;transform:scaleX(0.93);left:342px;">CO2</div>
<div class="t" style="top:479px;font-weight:bold;color:#000;transform:scaleX(0.93);left:419.5px;">Zn</div>
<div class="t" style="top:479px;font-weight:bold;color:#000;transform:scaleX(0.93);left:504px;">Pb</div>
<div class="t" style="top:492px;font-weight:bold;color:#000;transform:scaleX(0.93);color:#ff0000;left:-263px;width:600px;text-align:right;transform-origin:100% 0;">615.904167</div>
<div class="t" style="top:492px;font-weight:bold;color:#000;transform:scaleX(0.93);color:#ff0000;left:-186px;width:600px;text-align:right;transform-origin:100% 0;">18899.54001</div>
<div class="t" style="top:492px;font-weight:bold;color:#000;transform:scaleX(0.93);color:#ff0000;left:-101px;width:600px;text-align:right;transform-origin:100% 0;">130.2497665</div>
<div class="t" style="top:492px;font-weight:bold;color:#000;transform:scaleX(0.93);color:#ff0000;left:-69px;width:600px;text-align:right;transform-origin:100% 0;">3.24</div>
</div>
<div style="position:absolute;left:625px;top:212px;width:67px;height:16px;border:2px solid #0a246a;border-right:1px solid #0a246a;box-sizing:border-box"></div>
<div style="position:absolute;left:691px;top:213px;width:1px;height:12px;background:#b8c4dc"></div>
<div style="position:absolute;left:690px;top:225px;width:4px;height:4px;background:#0a246a;"></div>
</body></html>
